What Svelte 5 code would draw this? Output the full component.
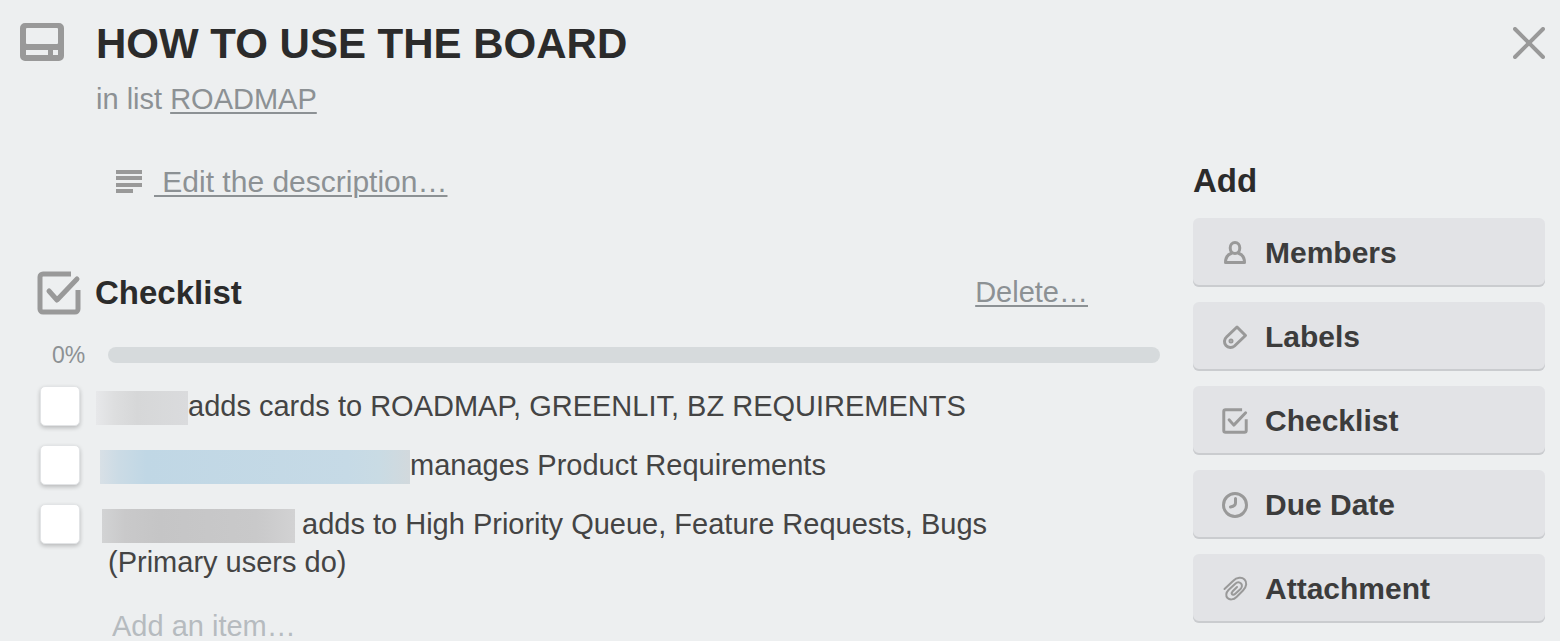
<script lang="ts">
  const actions = ['Members', 'Labels', 'Checklist', 'Due Date', 'Attachment'];

  let items = $state([
    { mask: 'short', text: 'adds cards to ROADMAP, GREENLIT, BZ REQUIREMENTS', done: false },
    { mask: 'wide', text: 'manages Product Requirements', done: false },
    { mask: 'medium', text: 'adds to High Priority Queue, Feature Requests, Bugs (Primary users do)', done: false }
  ]);

  let percent = $derived(Math.round((items.filter((i) => i.done).length / items.length) * 100));
</script>

{#snippet check()}
  <path stroke-linecap="butt" d="M34 3H6a3 3 0 0 0-3 3v32a3 3 0 0 0 3 3h32a3 3 0 0 0 3-3V19" />
  <path d="M12 20l8 9L40 8" />
{/snippet}

<main class="card">
  <header>
    <svg class="card-icon" viewBox="0 0 44 38" aria-hidden="true">
      <path
        fill="#999"
        fill-rule="evenodd"
        d="M5 0h34a5 5 0 0 1 5 5v28a5 5 0 0 1-5 5H5a5 5 0 0 1-5-5V5a5 5 0 0 1 5-5ZM7 5a1 1 0 0 0-1 1v14a1 1 0 0 0 1 1h30a1 1 0 0 0 1-1V6a1 1 0 0 0-1-1ZM6 27v5h22v-5ZM33 27v5h5v-5Z"
      />
    </svg>
    <div class="heading">
      <h1>HOW TO USE THE BOARD</h1>
      <p>in list <a href="#roadmap">ROADMAP</a></p>
    </div>
    <button class="close" type="button" aria-label="Close">
      <svg viewBox="0 0 32 32" aria-hidden="true"><path d="M2 2l28 28M30 2L2 30" /></svg>
    </button>
  </header>

  <div class="columns">
    <section class="main">
      <div class="description">
        <svg viewBox="0 0 26 24" aria-hidden="true">
          <path d="M0 2h26M0 8h26M0 15h26M0 21h17" stroke="#999" stroke-width="4" />
        </svg>
        <a href="#description">&nbsp;Edit the description…</a>
      </div>

      <div class="list-head">
        <svg viewBox="0 0 44 44" aria-hidden="true">{@render check()}</svg>
        <h2>Checklist</h2>
        <a href="#delete">Delete…</a>
      </div>

      <div class="progress">
        <span>{percent}%</span>
        <div class="track" role="progressbar" aria-label="Checklist" aria-valuenow={percent}>
          <div class="fill" style="width: {percent}%"></div>
        </div>
      </div>

      <ul>
        {#each items as item, i}
          <li>
            <input type="checkbox" id="item-{i}" bind:checked={item.done} />
            <label for="item-{i}"><span class="mask {item.mask}"></span>{item.text}</label>
          </li>
        {/each}
      </ul>
      <input class="new-item" type="text" placeholder="Add an item…" aria-label="Add an item" />
    </section>

    <aside>
      <h2>Add</h2>
      {#each actions as action}
        <button class="action" type="button">
          {#if action === 'Members'}
            <svg viewBox="0 0 26 26" aria-hidden="true">
              <path d="M9 13.500C5 15 3.500 18 3.500 22.500h19C22.500 18 21 15 17 13.500" />
              <ellipse cx="13" cy="8" rx="4.800" ry="5.500" />
            </svg>
          {:else if action === 'Labels'}
            <svg viewBox="0 0 26 26" aria-hidden="true">
              <path d="M15 3L4.500 13a6 6 0 0 0 8 9L23.500 11.500Z" />
              <circle cx="9" cy="17" r="1" />
            </svg>
          {:else if action === 'Checklist'}
            <svg class="heavy" viewBox="0 0 44 44" aria-hidden="true">{@render check()}</svg>
          {:else if action === 'Due Date'}
            <svg viewBox="0 0 26 26" aria-hidden="true">
              <circle cx="13" cy="13" r="11.500" />
              <path d="M13.500 6.500V11q0 3-5 4" />
            </svg>
          {:else}
            <svg class="thin" viewBox="0 0 26 26" aria-hidden="true">
              <path d="M2.500 13L11 5c4-4 9-4 11.500-1.500s2.500 7-1.500 11l-6.500 6.500c-3 3-7 3-9 1s-1.500-5.500 1-8L13 8c2-2 4.500-2 6-.5s1 4-.5 5.500L13 18c-1 1-2.500 1-3 .2s-.3-2 .7-3L15 11" />
            </svg>
          {/if}
          {action}
        </button>
      {/each}
    </aside>
  </div>
</main>

<style>
  :global(body) {
    margin: 0;
    background: #edeff0;
  }
  .card {
    padding: 23px 15px 0 20px;
    color: #444;
    font: 29px/38px 'Liberation Sans', Arial, sans-serif;
  }
  h1,
  h2,
  p,
  ul {
    margin: 0;
    padding: 0;
  }
  h1,
  h2 {
    color: #2b2b2b;
    font-weight: 700;
  }
  h1 {
    font-size: 42px;
    line-height: 42px;
  }
  h2 {
    font-size: 33px;
    line-height: 40px;
  }
  svg {
    flex: none;
    fill: none;
    stroke-linecap: round;
    stroke-linejoin: round;
  }
  a,
  p {
    color: #8c9194;
  }
  a {
    text-decoration-thickness: 2px;
    text-underline-offset: 3px;
  }
  button {
    border: 0;
    font: inherit;
    cursor: pointer;
  }
  header {
    display: flex;
    align-items: flex-start;
  }
  .card-icon {
    width: 44px;
    height: 38px;
  }
  .heading {
    flex: 1;
    margin-left: 32px;
  }
  p {
    margin-top: 15px;
  }
  .close {
    padding: 4px 0 0;
    background: none;
  }
  .close svg {
    display: block;
    width: 32px;
    height: 32px;
    stroke: #999;
    stroke-width: 4;
  }
  .columns {
    display: flex;
    gap: 33px;
    margin-top: 43px;
  }
  .main {
    flex: 1;
    min-width: 0;
  }
  .description {
    display: flex;
    align-items: center;
    gap: 12px;
    padding: 2px 0 0 96px;
    font-size: 30px;
  }
  .description svg {
    width: 26px;
    height: 24px;
    stroke-linecap: butt;
  }
  .list-head {
    display: flex;
    align-items: center;
    gap: 14px;
    margin-top: 70px;
    padding: 0 72px 0 17px;
  }
  .list-head svg {
    width: 44px;
    height: 44px;
    stroke: #999;
    stroke-width: 5;
  }
  .list-head h2 {
    flex: 1;
  }
  .list-head a {
    padding-bottom: 2px;
  }
  .progress {
    display: flex;
    align-items: center;
    margin-top: 28px;
    color: #8c9194;
    font-size: 23px;
    line-height: 24px;
  }
  .progress span {
    width: 56px;
    padding-left: 32px;
  }
  .track {
    flex: 1;
    height: 16px;
    border-radius: 8px;
    background: #d6dadc;
    overflow: hidden;
  }
  .fill {
    height: 100%;
    background: #61bd4f;
  }
  ul {
    margin-top: 19px;
    list-style: none;
  }
  li {
    display: flex;
    align-items: flex-start;
    gap: 28px;
    padding: 0 90px 19px 20px;
  }
  li input {
    flex: none;
    appearance: none;
    width: 40px;
    height: 40px;
    margin: 0;
    border: 1px solid #e2e4e6;
    border-radius: 5px;
    background: #fff;
    box-shadow: 0 2px 4px rgb(0 0 0 / 22%);
  }
  li input:checked {
    background: #61bd4f;
  }
  label {
    padding-top: 1px;
  }
  .mask {
    display: inline-block;
    height: 34px;
    vertical-align: middle;
  }
  .short {
    width: 92px;
    margin-left: -12px;
    background: linear-gradient(90deg, #e7e8ea, #dddedf 20%, #d6d7d8 45%, #dadbdd);
  }
  .wide {
    width: 310px;
    margin-left: -8px;
    background: linear-gradient(90deg, #d8e0e6, #cbdbe5 6%, #c0d7e5 15%, #c6dae6 80%, #c9dbe4 90%, #d2d9dd);
  }
  .medium {
    width: 193px;
    margin: 0 7px 0 -6px;
    background: linear-gradient(90deg, #d2d3d4, #c9c9ca 12%, #c5c5c6 30%, #c9c9ca 80%, #d2d2d3);
  }
  .new-item {
    display: block;
    box-sizing: border-box;
    width: 100%;
    height: 28px;
    margin-top: 12px;
    padding: 0 0 0 92px;
    border: 0;
    background: none;
    color: #444;
    font: inherit;
    line-height: 28px;
  }
  .new-item::placeholder {
    color: #b6bbbf;
    opacity: 1;
  }
  aside {
    display: flex;
    flex: 0 0 352px;
    flex-direction: column;
    gap: 15px;
  }
  aside h2 {
    margin-bottom: 2px;
  }
  .action {
    display: flex;
    align-items: center;
    gap: 17px;
    height: 69px;
    padding: 0 29px;
    border-radius: 6px;
    background: #e2e3e6;
    box-shadow: inset 0 -2px 0 #cacccf;
    color: #3c3c3c;
    font-size: 30px;
    font-weight: 700;
  }
  .action svg {
    width: 26px;
    height: 26px;
    stroke: #999;
    stroke-width: 3;
  }
  .action .heavy {
    stroke-width: 5;
  }
  .action .thin {
    stroke-width: 2;
  }
</style>
